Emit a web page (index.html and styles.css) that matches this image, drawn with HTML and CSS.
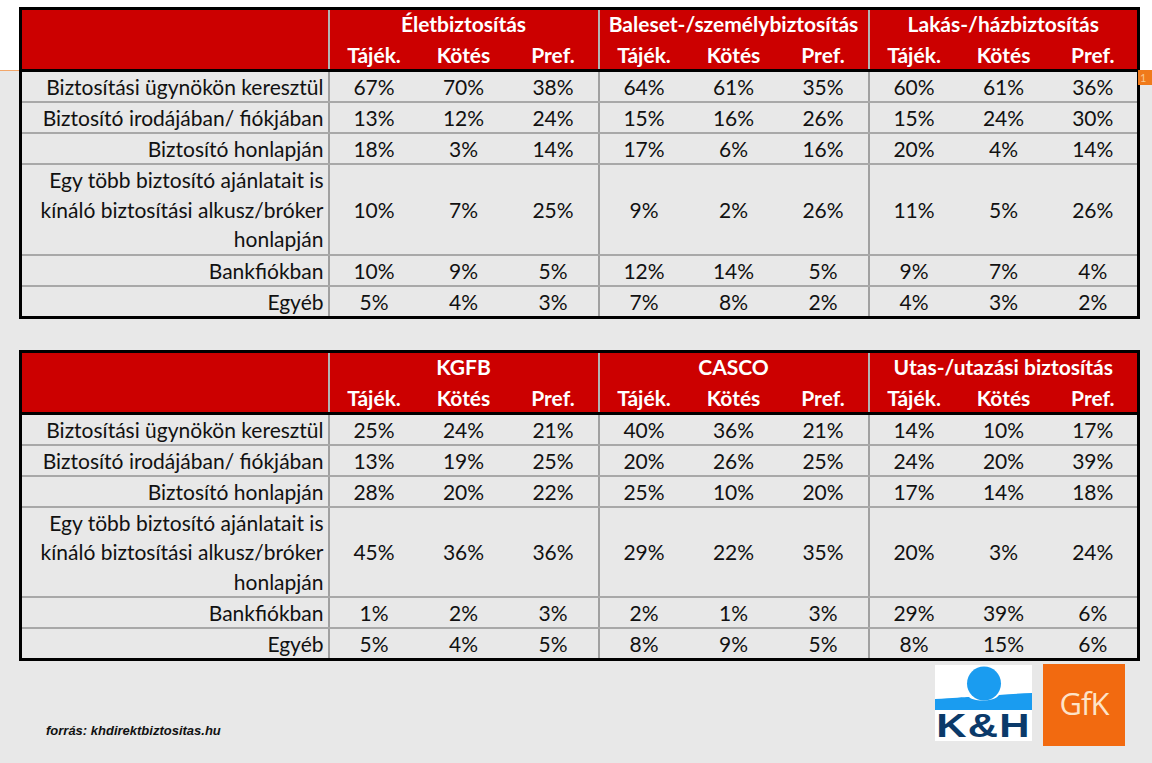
FILE: index.html
```html
<!DOCTYPE html>
<html lang="hu">
<head>
<meta charset="utf-8">
<title>Biztosítási csatornák</title>
<link rel="stylesheet" href="styles.css">
</head>
<body>
<div class="slide">
  <div class="slide-num">1</div>
  <div class="content">
    <table class="data">
      <colgroup><col class="c-label"><col class="c-num"><col class="c-num"><col class="c-num"><col class="c-num"><col class="c-num"><col class="c-num"><col class="c-num"><col class="c-num"><col class="c-num"></colgroup>
      <thead>
        <tr class="h1"><th class="h-blank" rowspan="2"></th><th colspan="3" class="g">Életbiztosítás</th><th colspan="3" class="g">Baleset-/személybiztosítás</th><th colspan="3" class="g">Lakás-/házbiztosítás</th></tr>
        <tr class="h2"><th class="g">Tájék.</th><th>Kötés</th><th>Pref.</th><th class="g">Tájék.</th><th>Kötés</th><th>Pref.</th><th class="g">Tájék.</th><th>Kötés</th><th>Pref.</th></tr>
      </thead>
      <tbody>
        <tr><td class="lbl">Biztosítási ügynökön keresztül</td><td class="g">67%</td><td>70%</td><td>38%</td><td class="g">64%</td><td>61%</td><td>35%</td><td class="g">60%</td><td>61%</td><td>36%</td></tr>
        <tr><td class="lbl">Biztosító irodájában/ fiókjában</td><td class="g">13%</td><td>12%</td><td>24%</td><td class="g">15%</td><td>16%</td><td>26%</td><td class="g">15%</td><td>24%</td><td>30%</td></tr>
        <tr><td class="lbl">Biztosító honlapján</td><td class="g">18%</td><td>3%</td><td>14%</td><td class="g">17%</td><td>6%</td><td>16%</td><td class="g">20%</td><td>4%</td><td>14%</td></tr>
        <tr class="multi"><td class="lbl">Egy több biztosító ajánlatait is<br>kínáló biztosítási alkusz/bróker<br>honlapján</td><td class="g">10%</td><td>7%</td><td>25%</td><td class="g">9%</td><td>2%</td><td>26%</td><td class="g">11%</td><td>5%</td><td>26%</td></tr>
        <tr><td class="lbl">Bankfiókban</td><td class="g">10%</td><td>9%</td><td>5%</td><td class="g">12%</td><td>14%</td><td>5%</td><td class="g">9%</td><td>7%</td><td>4%</td></tr>
        <tr><td class="lbl">Egyéb</td><td class="g">5%</td><td>4%</td><td>3%</td><td class="g">7%</td><td>8%</td><td>2%</td><td class="g">4%</td><td>3%</td><td>2%</td></tr>
      </tbody>
    </table>

    <table class="data">
      <colgroup><col class="c-label"><col class="c-num"><col class="c-num"><col class="c-num"><col class="c-num"><col class="c-num"><col class="c-num"><col class="c-num"><col class="c-num"><col class="c-num"></colgroup>
      <thead>
        <tr class="h1"><th class="h-blank" rowspan="2"></th><th colspan="3" class="g">KGFB</th><th colspan="3" class="g">CASCO</th><th colspan="3" class="g">Utas-/utazási biztosítás</th></tr>
        <tr class="h2"><th class="g">Tájék.</th><th>Kötés</th><th>Pref.</th><th class="g">Tájék.</th><th>Kötés</th><th>Pref.</th><th class="g">Tájék.</th><th>Kötés</th><th>Pref.</th></tr>
      </thead>
      <tbody>
        <tr><td class="lbl">Biztosítási ügynökön keresztül</td><td class="g">25%</td><td>24%</td><td>21%</td><td class="g">40%</td><td>36%</td><td>21%</td><td class="g">14%</td><td>10%</td><td>17%</td></tr>
        <tr><td class="lbl">Biztosító irodájában/ fiókjában</td><td class="g">13%</td><td>19%</td><td>25%</td><td class="g">20%</td><td>26%</td><td>25%</td><td class="g">24%</td><td>20%</td><td>39%</td></tr>
        <tr><td class="lbl">Biztosító honlapján</td><td class="g">28%</td><td>20%</td><td>22%</td><td class="g">25%</td><td>10%</td><td>20%</td><td class="g">17%</td><td>14%</td><td>18%</td></tr>
        <tr class="multi"><td class="lbl">Egy több biztosító ajánlatait is<br>kínáló biztosítási alkusz/bróker<br>honlapján</td><td class="g">45%</td><td>36%</td><td>36%</td><td class="g">29%</td><td>22%</td><td>35%</td><td class="g">20%</td><td>3%</td><td>24%</td></tr>
        <tr><td class="lbl">Bankfiókban</td><td class="g">1%</td><td>2%</td><td>3%</td><td class="g">2%</td><td>1%</td><td>3%</td><td class="g">29%</td><td>39%</td><td>6%</td></tr>
        <tr><td class="lbl">Egyéb</td><td class="g">5%</td><td>4%</td><td>5%</td><td class="g">8%</td><td>9%</td><td>5%</td><td class="g">8%</td><td>15%</td><td>6%</td></tr>
      </tbody>
    </table>

    <div class="footer">
      <p class="source">forrás: khdirektbiztositas.hu</p>
      <div class="logos">
        <div class="kh-logo">
          <svg class="kh-mark" width="97" height="45" viewBox="0 0 97 45" xmlns="http://www.w3.org/2000/svg">
            <circle cx="49" cy="18.5" r="17" fill="#1a9cf0"/>
            <path d="M0 34 C18 33 30 32 34 32 C38 37 60 37 64 30 C75 29 86 28.5 97 28 L97 45 L0 45 Z" fill="#1a9cf0"/>
          </svg>
          <div class="kh-text">K&amp;H</div>
        </div>
        <div class="gfk-logo">GfK</div>
      </div>
    </div>
  </div>
</div>
</body>
</html>
```
FILE: styles.css
```css
html, body {
  margin: 0;
  padding: 0;
}
body {
  width: 1152px;
  height: 763px;
  overflow: hidden;
  font-family: Lato, "Open Sans", sans-serif;
}
.slide {
  position: relative;
  width: 1152px;
  height: 763px;
  background: linear-gradient(to bottom, #ffffff 0, #ffffff 70px, #f2a66a 70px, #f2a66a 71px, #e8e8e8 71px);
}
.slide-num {
  position: absolute;
  left: 1138px;
  top: 70px;
  width: 14px;
  height: 15px;
  background: #f07a1a;
  color: #f9c890;
  font-size: 11px;
  line-height: 15px;
  padding-left: 2px;
  box-sizing: border-box;
}
.content {
  padding: 7px 0 0 19px;
  width: 1119px;
}
.data {
  border-collapse: collapse;
  table-layout: fixed;
  width: 1119px;
  border: 3px solid #000;
  margin-bottom: 31px;
  font-size: 21px;
  color: #111;
}
.c-label { width: 308px; }
.c-num { width: 90px; }
.data th {
  background: #cc0000;
  color: #ffffff;
  font-weight: 700;
  padding: 0;
  text-align: center;
}
.h1 th {
  height: 30px;
  line-height: 28px;
  vertical-align: top;
}
.h2 th {
  height: 29px;
  line-height: 29px;
  border-bottom: 3px solid #000;
}
.h-blank {
  border-bottom: 3px solid #000;
}
.data th.g {
  border-left: 2px solid #b3b3b3;
}
.data td {
  background: #e8e8e8;
  padding: 0;
  text-align: center;
  line-height: 29px;
  height: 29px;
  border-bottom: 2px solid #a8a8a8;
}
.data tr.multi td {
  line-height: 29.5px;
}
.data td.lbl {
  text-align: right;
  padding-right: 4px;
}
.data td.g {
  border-left: 2px solid #a0a0a0;
}
.footer {
  display: flex;
  justify-content: space-between;
  align-items: flex-start;
  margin-top: -28px;
}
.source {
  margin: 59px 0 0 27px;
  font-family: "Liberation Sans", Arial, sans-serif;
  font-weight: 700;
  font-style: italic;
  font-size: 13px;
  color: #111;
}
.logos {
  display: flex;
  gap: 11px;
  margin-right: 13px;
  align-items: flex-start;
}
.kh-logo {
  width: 97px;
  height: 76px;
  margin-top: 1px;
  background: #ffffff;
}
.kh-mark {
  display: block;
}
.kh-text {
  font-family: "Liberation Sans", Arial, sans-serif;
  font-weight: 700;
  font-size: 33px;
  line-height: 31px;
  height: 31px;
  color: #0b3a6a;
  text-align: center;
  letter-spacing: 1px;
  transform: scaleX(1.27);
}
.gfk-logo {
  width: 82px;
  height: 82px;
  background: #f26a10;
  color: #fde3c8;
  font-family: "Open Sans", Lato, sans-serif;
  font-size: 31px;
  line-height: 78px;
  text-align: center;
  letter-spacing: -1px;
}
```
